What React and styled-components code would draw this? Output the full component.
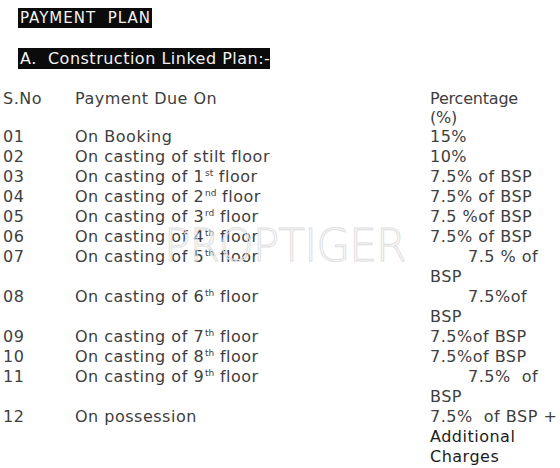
import React from 'react';
import styled, { createGlobalStyle } from 'styled-components';

const GlobalStyle = createGlobalStyle`
  html, body {
    margin: 0;
    padding: 0;
    background: #fff;
  }
  body {
    font-family: "DejaVu Sans", Verdana, sans-serif;
    color: #3e3e3e;
  }
`;

const Page = styled.div`
  position: relative;
  width: 560px;
  height: 468px;
  overflow: hidden;
  background: #fff;
`;

const TitleBlock = styled.div`
  display: flex;
  flex-direction: column;
  align-items: flex-start;
  gap: 20px;
  padding: 8px 0 0 18px;
`;

const Highlight = styled.span`
  display: inline-block;
  background: #0b0b0b;
  color: #f2f2f2;
  white-space: pre;
  font-size: ${(p) => p.size}px;
  letter-spacing: ${(p) => p.spacing}px;
  line-height: ${(p) => p.height}px;
  padding: 0 ${(p) => p.pad}px 0 2px;
`;

const Table = styled.div`
  display: grid;
  grid-template-columns: 72px 355px 1fr;
  padding: 20px 0 0 3px;
  font-size: 16px;
  letter-spacing: 0.5px;
  line-height: 20px;
`;

const HeadCell = styled.div`
  line-height: 19px;
  white-space: nowrap;
  letter-spacing: ${(p) => (p.tight ? '-0.2px' : '0.5px')};
`;

const Cell = styled.div`
  white-space: pre;
  color: ${(p) => (p.dark ? '#1c1c1c' : '#3e3e3e')};
`;

const Indented = styled.span`
  display: block;
  padding-left: ${(p) => p.indent}px;
`;

const Ord = styled.sup`
  font-size: 9px;
  letter-spacing: 0;
  line-height: 0;
  vertical-align: 6px;
  margin-left: 1px;
`;

const Watermark = styled.div`
  position: absolute;
  left: 164px;
  top: 220px;
  font-family: "DejaVu Sans", sans-serif;
  font-weight: 200;
  font-size: 44px;
  letter-spacing: -1px;
  color: transparent;
  -webkit-text-stroke: 1px #dedede;
  pointer-events: none;
`;

const floor = (n, ord) => (
  <>
    On casting of {n}
    <Ord>{ord}</Ord> floor
  </>
);

const rows = [
  { no: '01', due: 'On Booking', pct: ['15%'] },
  { no: '02', due: 'On casting of stilt floor', pct: ['10%'] },
  { no: '03', due: floor(1, 'st'), pct: ['7.5% of BSP'] },
  { no: '04', due: floor(2, 'nd'), pct: ['7.5% of BSP'] },
  { no: '05', due: floor(3, 'rd'), pct: ['7.5 %of BSP'] },
  { no: '06', due: floor(4, 'th'), pct: ['7.5% of BSP'] },
  { no: '07', due: floor(5, 'th'), pct: ['7.5 % of', 'BSP'], indent: 38 },
  { no: '08', due: floor(6, 'th'), pct: ['7.5%of', 'BSP'], indent: 38 },
  { no: '09', due: floor(7, 'th'), pct: ['7.5%of BSP'] },
  { no: '10', due: floor(8, 'th'), pct: ['7.5%of BSP'] },
  { no: '11', due: floor(9, 'th'), pct: ['7.5%  of', 'BSP'], indent: 38 },
  { no: '12', due: 'On possession', pct: ['7.5%  of BSP +', 'Additional', 'Charges'], dark: true },
];

export default function App() {
  return (
    <Page>
      <GlobalStyle />
      <TitleBlock>
        <Highlight size={15} spacing={1} height={20} pad={1}>PAYMENT  PLAN</Highlight>
        <Highlight size={16} spacing={0.5} height={21} pad={0}>A.  Construction Linked Plan:-</Highlight>
      </TitleBlock>
      <Table>
        <HeadCell>S.No</HeadCell>
        <HeadCell>Payment Due On</HeadCell>
        <HeadCell tight>
          Percentage
          <br />
          (%)
        </HeadCell>
        {rows.map((r) => (
          <React.Fragment key={r.no}>
            <Cell>{r.no}</Cell>
            <Cell>{r.due}</Cell>
            <Cell>
              {r.pct.map((line, i) => (
                <Indented key={line} indent={i === 0 && r.indent ? r.indent : 0}>
                  {r.dark && i > 0 ? <Cell as="span" dark>{line}</Cell> : line}
                </Indented>
              ))}
            </Cell>
          </React.Fragment>
        ))}
      </Table>
      <Watermark>PROPTIGER</Watermark>
    </Page>
  );
}
